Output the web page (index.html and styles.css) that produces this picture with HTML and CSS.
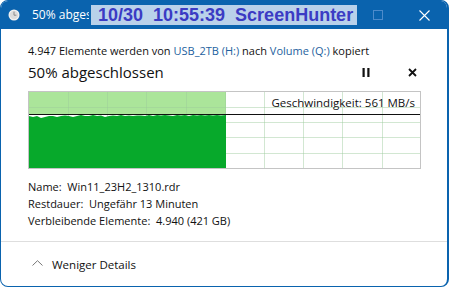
FILE: index.html
```html
<!DOCTYPE html>
<html lang="de">
<head>
    <meta charset="UTF-8">
    <title>50% abgeschlossen</title>
    <link rel="stylesheet" href="styles.css">
</head>
<body>
    <div class="window">
        <div class="titlebar">
            <svg class="title-icon" width="12" height="12" viewBox="0 0 12 12">
                <circle cx="6" cy="6" r="5.5" fill="#f2f2f2"/>
                <circle cx="6" cy="6" r="4.3" fill="#dcdcdc"/>
                <path d="M6 2.6 V6.2 H8.4" stroke="#8a8a8a" stroke-width="1" fill="none"/>
            </svg>
            <span class="title-text">50% abgeschlossen</span>
            <div class="title-buttons">
                <span class="tb-btn tb-max"></span>
                <span class="tb-btn tb-close">
                    <svg width="11" height="11" viewBox="0 0 11 11">
                        <path d="M0.5 0.5 L10.5 10.5 M10.5 0.5 L0.5 10.5" stroke="#fff" stroke-width="1.1"/>
                    </svg>
                </span>
            </div>
            <div class="stamp">10/30&nbsp;&nbsp;10:55:39&nbsp;&nbsp;ScreenHunter</div>
        </div>

        <div class="content">
            <p class="summary">4.947 Elemente werden von <a href="#">USB_2TB (H:)</a> nach <a href="#">Volume (Q:)</a> kopiert</p>

            <div class="status-row">
                <h1 class="status">50% abgeschlossen</h1>
                <button class="ctl" title="Anhalten">
                    <svg width="8" height="9" viewBox="0 0 8 9">
                        <rect x="0.5" y="0" width="2.2" height="9" fill="#111"/>
                        <rect x="5.3" y="0" width="2.2" height="9" fill="#111"/>
                    </svg>
                </button>
                <button class="ctl" title="Abbrechen">
                    <svg width="9" height="9" viewBox="0 0 9 9">
                        <path d="M1 1 L8 8 M8 1 L1 8" stroke="#111" stroke-width="1.8"/>
                    </svg>
                </button>
            </div>

            <div class="chart">
                <svg class="chart-svg" width="391" height="76" viewBox="0 0 391 76">
                    <rect x="0" y="0" width="197" height="23" fill="#abe59a"/>
                    <g stroke="#9cc99c" stroke-opacity="0.45" stroke-width="1">
                        <path d="M39.5 0 V76 M78.5 0 V76 M117.5 0 V76 M157.5 0 V76 M196.5 0 V76 M235.5 0 V76 M274.5 0 V76 M313.5 0 V76 M353.5 0 V76"/>
                        <path d="M0 15.5 H391 M0 30.5 H391 M0 45.5 H391 M0 61.5 H391"/>
                    </g>
                    <polygon fill="#07a92b" points="0,24 4,25 8,24 12,26 16,25 20,24 24,24 28,25 32,24 36,23.5 40,24 44,25 48,24 52,23 56,24 60,24 64,23 68,24 72,23.5 76,25 80,24 84,23.5 88,24 92,23 96,24 100,23.5 104,24 108,23.5 112,23.5 116,24 120,23 124,24 128,23 132,23.5 136,23 140,23.5 144,24 148,23 152,23.5 156,23 160,24 164,23 168,23.5 172,23 176,23.5 180,23 184,23.5 188,23 192,23.5 197,23 197,76 0,76"/>
                    <path d="M0 22.5 H391" stroke="#111" stroke-width="1.2"/>
                </svg>
                <span class="speed">Geschwindigkeit: 561 MB/s</span>
            </div>

            <div class="details">
                <p>Name:&nbsp; Win11_23H2_1310.rdr</p>
                <p>Restdauer:&nbsp; Ungefähr 13 Minuten</p>
                <p>Verbleibende Elemente:&nbsp; 4.940 (421 GB)</p>
            </div>
        </div>

        <div class="footer">
            <svg class="chevron" width="11" height="6" viewBox="0 0 11 6">
                <path d="M0.5 5.5 L5.5 0.7 L10.5 5.5" stroke="#777" stroke-width="1" fill="none"/>
            </svg>
            <span>Weniger Details</span>
        </div>
    </div>
</body>
</html>
```

FILE: styles.css
```css
* {
    margin: 0;
    padding: 0;
    box-sizing: border-box;
}

body {
    background: #ffffff;
    width: 449px;
    height: 287px;
    overflow: hidden;
    font-family: 'Open Sans', 'Noto Sans', sans-serif;
    color: #111;
}

.window {
    width: 449px;
    height: 287px;
    border: 1px solid #0a63ae;
    border-right-width: 2px;
    border-radius: 8px;
    overflow: hidden;
    display: flex;
    flex-direction: column;
    background: #fff;
}

/* title bar */
.titlebar {
    position: relative;
    height: 28px;
    background: #0a63ae;
    display: flex;
    align-items: center;
    padding-left: 7px;
    flex-shrink: 0;
}

.title-icon {
    margin-top: -1px;
}

/* the capture stamp covers the rest of the title */
.title-text {
    color: #fff;
    font-size: 12px;
    margin-left: 12px;
    margin-top: -1px;
    max-width: 57px;
    overflow: hidden;
    white-space: nowrap;
}

.title-buttons {
    margin-left: auto;
    display: flex;
    align-items: center;
    height: 100%;
}

.tb-btn {
    width: 46px;
    height: 100%;
    display: flex;
    align-items: center;
    justify-content: center;
}

.tb-max::before {
    content: '';
    width: 8px;
    height: 8px;
    border: 1px solid #4d8bcb;
}

.stamp {
    position: absolute;
    left: 90px;
    top: 4px;
    width: 266px;
    height: 20px;
    background: #b9d1ea;
    color: #3b3bc4;
    font-family: 'Liberation Sans', Arial, sans-serif;
    font-weight: bold;
    font-size: 18px;
    line-height: 20px;
    padding-left: 7px;
    white-space: nowrap;
}

/* main area */
.content {
    padding: 0 26px 0 27px;
}

.summary {
    margin-top: 14px;
    font-size: 11px;
    line-height: 16px;
    white-space: nowrap;
}

.summary a {
    color: #1e5f9e;
    text-decoration: none;
}

.status-row {
    display: flex;
    align-items: center;
    height: 22px;
    margin-top: 2px;
    margin-right: -14px;
}

.status {
    flex: 1;
    font-size: 15px;
    font-weight: normal;
    line-height: 22px;
}

.ctl {
    width: 46px;
    height: 22px;
    border: none;
    background: none;
    display: flex;
    align-items: center;
    justify-content: center;
}

.chart {
    position: relative;
    width: 393px;
    height: 78px;
    margin-top: 8px;
    border: 1px solid #c4c4c4;
}

.chart-svg {
    display: block;
}

.speed {
    position: absolute;
    right: 5px;
    top: 3px;
    font-size: 11.5px;
    line-height: 16px;
    white-space: nowrap;
}

.details {
    margin-top: 9px;
    font-size: 11px;
    line-height: 17px;
}

.footer {
    margin-top: auto;
    height: 45px;
    border-top: 1px solid #dedede;
    display: flex;
    align-items: center;
    padding-left: 31px;
    font-size: 11.5px;
}

.chevron {
    margin-right: 9px;
    margin-top: -3px;
}
```
